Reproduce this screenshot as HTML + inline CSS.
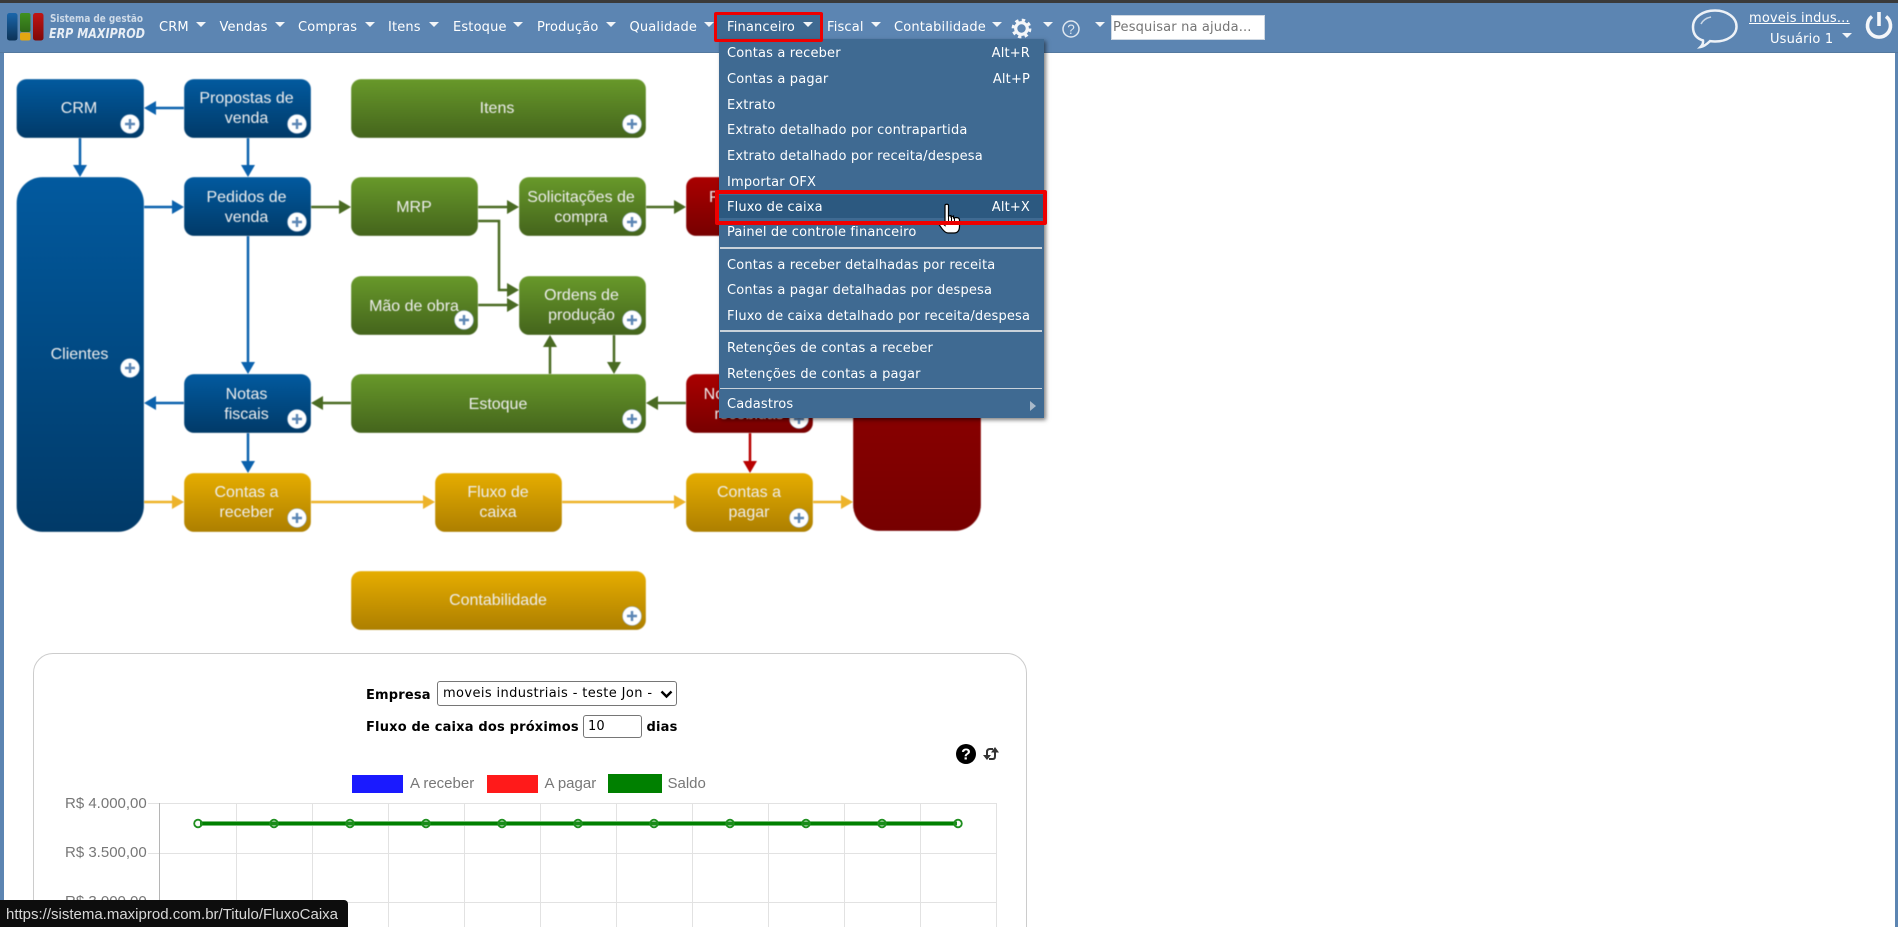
<!DOCTYPE html>
<html lang="pt-BR"><head><meta charset="utf-8"><title>ERP MAXIPROD</title>
<style>
html,body{margin:0;padding:0;width:1898px;height:927px;overflow:hidden;background:#fff}
body{position:relative;font-family:"DejaVu Sans","Liberation Sans",sans-serif;font-size:13px;letter-spacing:.16px;color:#fff}
.a{position:absolute;white-space:nowrap}
.m{position:absolute;top:18px;height:20px;line-height:20px;white-space:nowrap;color:#fff}
.c{position:absolute;top:22px;width:0;height:0;border-left:5.5px solid transparent;border-right:5.5px solid transparent;border-top:5.5px solid #f2f5f8}
.r{position:absolute;left:727px;height:20px;line-height:20px;white-space:nowrap;color:#fff}
.k{position:absolute;right:868px;height:20px;line-height:20px;color:#fff}
.s{position:absolute;left:720px;width:322px;background:#c9d2da}
.b{position:absolute;font-weight:bold;color:#000;height:20px;line-height:20px;white-space:nowrap;letter-spacing:.18px}
svg{position:absolute;overflow:visible;letter-spacing:0}
</style></head><body>

<!-- page frame -->
<div class="a" style="left:0;top:53px;width:4px;height:874px;background:#5c85b2"></div>
<div class="a" style="left:1895px;top:53px;width:3px;height:874px;background:#5c85b2"></div>

<!-- diagram -->
<svg style="left:0;top:0;filter:blur(.4px)" width="1898" height="650" viewBox="0 0 1898 650" font-family="'Liberation Sans',Arial,sans-serif" font-size="16" fill="#eeeeee" text-anchor="middle">
<defs>
<linearGradient id="gb" x1="0" y1="0" x2="0" y2="1"><stop offset="0" stop-color="#025a9f"/><stop offset="1" stop-color="#013a68"/></linearGradient>
<linearGradient id="gg" x1="0" y1="0" x2="0" y2="1"><stop offset="0" stop-color="#68992a"/><stop offset="1" stop-color="#44641c"/></linearGradient>
<linearGradient id="gr" x1="0" y1="0" x2="0" y2="1"><stop offset="0" stop-color="#aa0000"/><stop offset="1" stop-color="#770000"/></linearGradient>
<linearGradient id="gy" x1="0" y1="0" x2="0" y2="1"><stop offset="0" stop-color="#e6ad00"/><stop offset="1" stop-color="#ad7f00"/></linearGradient>
<marker id="mb" markerUnits="userSpaceOnUse" markerWidth="12" markerHeight="14" refX="6" refY="7" orient="auto"><path d="M0 0L12 7L0 14z" fill="#0b62ad"/></marker>
<marker id="mg" markerUnits="userSpaceOnUse" markerWidth="12" markerHeight="14" refX="6" refY="7" orient="auto"><path d="M0 0L12 7L0 14z" fill="#4a6b23"/></marker>
<marker id="my" markerUnits="userSpaceOnUse" markerWidth="12" markerHeight="14" refX="6" refY="7" orient="auto"><path d="M0 0L12 7L0 14z" fill="#edb32a"/></marker>
<marker id="mr" markerUnits="userSpaceOnUse" markerWidth="12" markerHeight="14" refX="6" refY="7" orient="auto"><path d="M0 0L12 7L0 14z" fill="#b80000"/></marker>
<g id="p"><circle r="9.5" fill="#fff" stroke="#8fa9c6" stroke-width=".6"/><path d="M-5 0H5M0-5V5" stroke="#5b86b5" stroke-width="2.400" fill="none"/></g>
</defs>

<g fill="none" stroke-width="2.500">
<g stroke="#0b62ad">
<path d="M184 108H150" marker-end="url(#mb)"/><path d="M80 138V171" marker-end="url(#mb)"/><path d="M248 138V171" marker-end="url(#mb)"/><path d="M144 207H178" marker-end="url(#mb)"/><path d="M248 236V368" marker-end="url(#mb)"/><path d="M184 403H150" marker-end="url(#mb)"/><path d="M248 433V467" marker-end="url(#mb)"/>
</g>
<g stroke="#4a6b23">
<path d="M311 207H345" marker-end="url(#mg)"/><path d="M478 207H513" marker-end="url(#mg)"/><path d="M646 207H680" marker-end="url(#mg)"/><path d="M478 221H499V290H513" marker-end="url(#mg)"/><path d="M478 305H513" marker-end="url(#mg)"/><path d="M550 374V341" marker-end="url(#mg)"/><path d="M614 335V368" marker-end="url(#mg)"/><path d="M351 403H317" marker-end="url(#mg)"/><path d="M686 403H652" marker-end="url(#mg)"/>
</g>
<g stroke="#edb32a">
<path d="M144 502H178" marker-end="url(#my)"/><path d="M311 502H429" marker-end="url(#my)"/><path d="M562 502H680" marker-end="url(#my)"/><path d="M813 502H847" marker-end="url(#my)"/>
</g>
<path d="M750 433V467" stroke="#b80000" marker-end="url(#mr)"/>
</g>

<g stroke="#fff" stroke-opacity=".35" stroke-width="1">
<rect x="16.5" y="79" width="127.5" height="59" rx="10" fill="url(#gb)"/>
<rect x="184" y="79" width="127" height="59" rx="10" fill="url(#gb)"/>
<rect x="351" y="79" width="295" height="59" rx="10" fill="url(#gg)"/>
<rect x="16.5" y="177" width="127.5" height="355" rx="26" fill="url(#gb)"/>
<rect x="184" y="177" width="127" height="59" rx="10" fill="url(#gb)"/>
<rect x="351" y="177" width="127" height="59" rx="10" fill="url(#gg)"/>
<rect x="519" y="177" width="127" height="59" rx="10" fill="url(#gg)"/>
<rect x="686" y="177" width="127" height="59" rx="10" fill="url(#gr)"/>
<rect x="351" y="276" width="127" height="59" rx="10" fill="url(#gg)"/>
<rect x="519" y="276" width="127" height="59" rx="10" fill="url(#gg)"/>
<rect x="184" y="374" width="127" height="59" rx="10" fill="url(#gb)"/>
<rect x="351" y="374" width="295" height="59" rx="10" fill="url(#gg)"/>
<rect x="686" y="374" width="127" height="59" rx="10" fill="url(#gr)"/>
<rect x="184" y="473" width="127" height="59" rx="10" fill="url(#gy)"/>
<rect x="435" y="473" width="127" height="59" rx="10" fill="url(#gy)"/>
<rect x="686" y="473" width="127" height="59" rx="10" fill="url(#gy)"/>
<rect x="853" y="177" width="128" height="354" rx="26" fill="url(#gr)"/>
<rect x="351" y="571" width="295" height="59" rx="10" fill="url(#gy)"/>
</g>

<text x="79" y="113">CRM</text>
<text x="246.500" y="103">Propostas de</text><text x="246.500" y="123">venda</text>
<text x="497" y="113">Itens</text>
<text x="79.5" y="359">Clientes</text>
<text x="246.500" y="202">Pedidos de</text><text x="246.500" y="222">venda</text>
<text x="414" y="212">MRP</text>
<text x="581" y="202">Solicitações de</text><text x="581" y="222">compra</text>
<text x="749" y="202">Pedidos de</text><text x="749" y="222">compra</text>
<text x="414" y="311">Mão de obra</text>
<text x="581.500" y="300">Ordens de</text><text x="581.500" y="320">produção</text>
<text x="246.500" y="399">Notas</text><text x="246.500" y="419">fiscais</text>
<text x="498" y="409">Estoque</text>
<text x="749" y="399">Notas fiscais</text><text x="749" y="419">recebidas</text>
<text x="246.500" y="497">Contas a</text><text x="246.500" y="517">receber</text>
<text x="498" y="497">Fluxo de</text><text x="498" y="517">caixa</text>
<text x="749" y="497">Contas a</text><text x="749" y="517">pagar</text>
<text x="917" y="359">Fornecedores</text>
<text x="498" y="605">Contabilidade</text>

<use href="#p" x="130" y="124"/><use href="#p" x="297" y="124"/><use href="#p" x="632" y="124"/>
<use href="#p" x="130" y="368"/><use href="#p" x="297" y="222"/><use href="#p" x="632" y="222"/><use href="#p" x="799" y="222"/>
<use href="#p" x="464" y="320"/><use href="#p" x="632" y="320"/><use href="#p" x="297" y="419"/><use href="#p" x="632" y="419"/><use href="#p" x="799" y="419"/>
<use href="#p" x="297" y="518"/><use href="#p" x="799" y="518"/><use href="#p" x="632" y="616"/>
</svg>

<!-- chart panel -->
<div class="a" style="left:32.500px;top:653px;width:994px;height:300px;border:1px solid #ccc;border-radius:20px;box-sizing:border-box"></div>
<div class="b" style="left:366px;top:686px">Empresa</div>
<div class="a" style="left:437px;top:681px;width:240px;height:25px;box-sizing:border-box;border:1px solid #767676;border-radius:3px;background:#fff;color:#000;line-height:24px;padding-left:5px;letter-spacing:.38px;overflow:hidden">moveis industriais - teste Jon -</div>
<svg style="left:660px;top:690px" width="13" height="10" viewBox="0 0 13 10"><path d="M1.500 1.500L6.500 6.500L11.500 1.500" fill="none" stroke="#000" stroke-width="2.400"/></svg>
<div class="b" style="left:366px;top:718px">Fluxo de caixa dos próximos</div>
<div class="a" style="left:583px;top:715px;width:59px;height:23px;box-sizing:border-box;border:1px solid #767676;border-radius:3px;padding-left:4px;background:#fff;color:#000;line-height:21px">10</div>
<div class="b" style="left:646.500px;top:718px">dias</div>

<svg style="left:0;top:0" width="1898" height="927" viewBox="0 0 1898 927" font-family="'Liberation Sans',Arial,sans-serif">
<!-- help + refresh -->
<circle cx="966" cy="754" r="10" fill="#000"/>
<text x="966" y="759.500" font-size="16" font-weight="bold" fill="#fff" text-anchor="middle">?</text>
<g fill="none" stroke="#333" stroke-width="2">
<path d="M993 749H990C988 749 987 750 987 752V756"/>
<path d="M989 759H993C994.500 759 995 758 995 756V752"/>
</g>
<path d="M983 755H991L987 760zM991 752.500H999L995 747z" fill="#333"/>
<!-- legend -->
<rect x="352" y="775" width="51" height="18" fill="#1a1aff"/>
<rect x="487" y="775" width="51" height="18" fill="#ff1a1a"/>
<rect x="608" y="774" width="54" height="19" fill="#008000"/>
<g font-size="15" fill="#777">
<text x="410" y="788">A receber</text><text x="544.500" y="788">A pagar</text><text x="667.500" y="788">Saldo</text>
<text x="65" y="808">R$ 4.000,00</text><text x="65" y="857">R$ 3.500,00</text><text x="65" y="906">R$ 3.000,00</text>
</g>
<!-- grid -->
<g stroke="#e2e2e2" stroke-width="1" fill="none">
<path d="M148 803.500H997M148 853.500H997M148 902.500H997"/>
<path d="M236.500 803V927M312.500 803V927M388.500 803V927M464.500 803V927M540.500 803V927M616.500 803V927M692.500 803V927M768.500 803V927M844.500 803V927M920.500 803V927M996.500 803V927"/>
</g>
<path d="M159.500 803V927" stroke="#b5b5b5"/>
<path d="M200 823.500H957" stroke="#9fd09f" stroke-width="5" fill="none"/>
<path d="M200 823.500H957" stroke="#008000" stroke-width="3.400" fill="none"/>
<g fill="#cfe6cf" fill-opacity=".12" stroke="#1f8f1f" stroke-width="1.800">
<circle cx="198" cy="823.500" r="3.800"/><circle cx="274" cy="823.500" r="3.800"/><circle cx="350" cy="823.500" r="3.800"/><circle cx="426" cy="823.500" r="3.800"/><circle cx="502" cy="823.500" r="3.800"/><circle cx="578" cy="823.500" r="3.800"/><circle cx="654" cy="823.500" r="3.800"/><circle cx="730" cy="823.500" r="3.800"/><circle cx="806" cy="823.500" r="3.800"/><circle cx="882" cy="823.500" r="3.800"/><circle cx="958" cy="823.500" r="3.800"/>
</g>
</svg>

<!-- status bar -->
<div class="a" style="left:0;top:900px;width:347.500px;height:27px;background:#0d0d0d;border-top-right-radius:4px"></div>
<svg style="left:0;top:900px" width="348" height="27" font-family="'Liberation Sans',Arial,sans-serif"><text x="6" y="19" font-size="15" fill="#d8d8d8" textLength="332" lengthAdjust="spacingAndGlyphs">https://sistema.maxiprod.com.br/Titulo/FluxoCaixa</text></svg>

<!-- header -->
<div class="a" style="left:0;top:0;width:1898px;height:3px;background:#3a3a3a"></div>
<div class="a" style="left:0;top:3px;width:1898px;height:50px;background:#5c85b2;border-bottom:1px solid #54799f;box-sizing:border-box"></div>

<svg style="left:0;top:0;filter:blur(.25px)" width="150" height="53" viewBox="0 0 150 53" font-family="'DejaVu Sans',sans-serif" fill="#dfe7f0">
<defs>
<linearGradient id="l1" x1="0" y1="0" x2="0" y2="1"><stop offset="0" stop-color="#1a66ab"/><stop offset="1" stop-color="#0c3357"/></linearGradient>
<linearGradient id="l2" x1="0" y1="0" x2="0" y2="1"><stop offset="0" stop-color="#3f9020"/><stop offset="1" stop-color="#2f6a18"/></linearGradient>
<linearGradient id="l3" x1="0" y1="0" x2="0" y2="1"><stop offset="0" stop-color="#c01515"/><stop offset="1" stop-color="#7e0808"/></linearGradient>
</defs>
<rect x="7" y="13" width="10.500" height="27.500" rx="2.500" fill="url(#l1)"/>
<rect x="20" y="13" width="10.500" height="19" rx="2" fill="url(#l2)"/>
<rect x="20" y="32.500" width="10.500" height="8" rx="2" fill="#e3a712"/>
<rect x="33" y="13" width="10.500" height="27.500" rx="2.500" fill="url(#l3)"/>
<text x="50" y="22" font-size="10.500" font-weight="bold" fill="#cfdbe8" textLength="93" lengthAdjust="spacingAndGlyphs">Sistema de gestão</text>
<text x="49" y="38" font-size="13" font-weight="bold" font-style="italic" fill="#e8eef5" textLength="96" lengthAdjust="spacingAndGlyphs">ERP MAXIPROD</text>
</svg>

<div class="m" style="left:159px">CRM</div><div class="c" style="left:196px"></div>
<div class="m" style="left:219.500px">Vendas</div><div class="c" style="left:275px"></div>
<div class="m" style="left:298px">Compras</div><div class="c" style="left:365px"></div>
<div class="m" style="left:388px">Itens</div><div class="c" style="left:429px"></div>
<div class="m" style="left:453px">Estoque</div><div class="c" style="left:513px"></div>
<div class="m" style="left:537px">Produção</div><div class="c" style="left:606px"></div>
<div class="m" style="left:629.500px">Qualidade</div><div class="c" style="left:704px"></div>
<div class="a" style="left:715px;top:13px;width:108px;height:28px;background:#3f6a92"></div>
<div class="m" style="left:727px">Financeiro</div><div class="c" style="left:803px"></div>
<div class="m" style="left:827px">Fiscal</div><div class="c" style="left:871px"></div>
<div class="m" style="left:894px">Contabilidade</div><div class="c" style="left:992px"></div>
<div class="c" style="left:1043px"></div><div class="c" style="left:1095px"></div>

<svg style="left:1005px;top:14px" width="90" height="30" viewBox="1005 14 90 30" fill="none" font-family="'Liberation Sans',Arial,sans-serif">
<circle cx="1021.500" cy="28.500" r="5.800" stroke="#f4f6f9" stroke-width="3.200"/>
<circle cx="1021.500" cy="28.500" r="8.300" stroke="#f4f6f9" stroke-width="3.200" stroke-dasharray="3.300 3.220"/>
<circle cx="1071" cy="29" r="8" stroke="#dfe7f0" stroke-width="1.500"/>
<text x="1071" y="34" font-size="13.500" fill="#dfe7f0" text-anchor="middle">?</text>
</svg>

<div class="a" style="left:1111px;top:15px;width:154px;height:25px;background:#fff;border:1px solid #cfd8e2;box-sizing:border-box;color:#757575;line-height:24px;padding-left:1px;overflow:hidden">Pesquisar na ajuda...</div>

<svg style="left:1685px;top:4px;filter:blur(.2px)" width="60" height="50" viewBox="1685 4 60 50" fill="none">
<path d="M1703 40.500C1695 38 1693 32 1693 27C1693 17 1703 10.500 1715 10.500C1727 10.500 1736.500 17.500 1736.500 26.500C1736.500 35.500 1727 41.500 1715 41.500C1713 41.500 1711.500 41.300 1710 41.100C1707 44 1704 46.500 1700.500 47C1702.500 45 1703.500 43 1703 40.500Z" stroke="#eef2f7" stroke-width="2.500"/>
<path d="M1701 24C1703 20 1706 18 1711 17" stroke="#c9d6e5" stroke-width="1.600"/>
</svg>
<div class="a" style="left:1749px;top:9px;height:20px;line-height:20px;text-decoration:underline;color:#fff">moveis indus...</div>
<div class="a" style="left:1770px;top:30px;height:20px;line-height:20px;color:#fff">Usuário 1</div>
<div class="c" style="left:1842px;top:33px"></div>
<svg style="left:1860px;top:8px" width="38" height="38" viewBox="1860 8 38 38" fill="none"><path d="M1872 16.500A11.500 11.500 0 1 0 1886 16.500" stroke="#f4f6f9" stroke-width="3.600"/><path d="M1879 12V26" stroke="#f4f6f9" stroke-width="3.600"/></svg>

<!-- dropdown -->
<div class="a" style="left:719px;top:39px;width:325px;height:379px;background:#3f6a92;box-shadow:2px 2px 4px rgba(0,0,0,.5)"></div>
<div class="a" style="left:719px;top:195px;width:325px;height:23px;background:#2c5980"></div>
<div class="r" style="top:44px">Contas a receber</div><div class="k" style="top:44px">Alt+R</div>
<div class="r" style="top:70px">Contas a pagar</div><div class="k" style="top:70px">Alt+P</div>
<div class="r" style="top:96px">Extrato</div>
<div class="r" style="top:121px">Extrato detalhado por contrapartida</div>
<div class="r" style="top:147px">Extrato detalhado por receita/despesa</div>
<div class="r" style="top:173px">Importar OFX</div>
<div class="r" style="top:198px">Fluxo de caixa</div><div class="k" style="top:198px">Alt+X</div>
<div class="r" style="top:223px">Painel de controle financeiro</div>
<div class="s" style="top:247px;height:2px"></div>
<div class="r" style="top:256px">Contas a receber detalhadas por receita</div>
<div class="r" style="top:281px">Contas a pagar detalhadas por despesa</div>
<div class="r" style="top:307px">Fluxo de caixa detalhado por receita/despesa</div>
<div class="s" style="top:330px;height:2px"></div>
<div class="r" style="top:339px">Retenções de contas a receber</div>
<div class="r" style="top:365px">Retenções de contas a pagar</div>
<div class="s" style="top:388px;height:1px"></div>
<div class="r" style="top:395px">Cadastros</div>
<div class="a" style="left:1030px;top:401px;width:0;height:0;border-top:5px solid transparent;border-bottom:5px solid transparent;border-left:6px solid #a9b9c9"></div>

<!-- hand cursor (under the red highlight) -->
<svg style="left:936px;top:202px" width="28" height="34" viewBox="936 202 28 34">
<path d="M945 205.500C945 203.800 948.500 203.800 948.500 205.500V216L951 215.500V217L953.500 216V218L956 217.500C958 217.500 959.500 218 959.500 220V226C959.500 230 958 233 954 233H948C945 233 943 230 941.500 228L939 224.500C938.500 222.500 940.500 222 942 223L945 225.500Z" fill="#fff" stroke="#000" stroke-width="1.200"/>
<path d="M948.500 216V221M951.500 216.500V221M954.500 217.500V221" stroke="#000" stroke-width="1" fill="none"/>
</svg>

<!-- red highlights -->
<div class="a" style="left:714px;top:12px;width:109px;height:29.500px;border:3.500px solid #ee0000;box-sizing:border-box;border-radius:2px"></div>
<div class="a" style="left:715px;top:190px;width:332px;height:34.500px;border:4px solid #ee0000;box-sizing:border-box;border-radius:2px"></div>
</body></html>
